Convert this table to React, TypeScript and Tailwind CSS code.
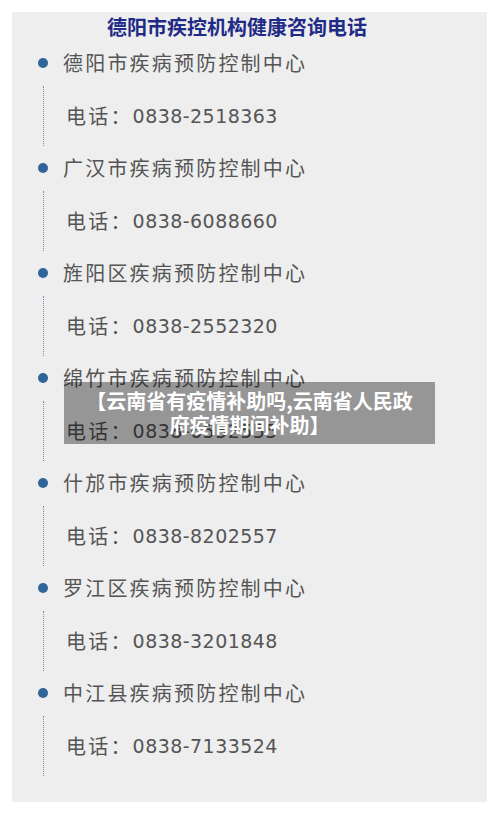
import React from "react";

const items = [
  { name: "德阳市疾病预防控制中心", phone: "0838-2518363" },
  { name: "广汉市疾病预防控制中心", phone: "0838-6088660" },
  { name: "旌阳区疾病预防控制中心", phone: "0838-2552320" },
  { name: "绵竹市疾病预防控制中心", phone: "0838-6552555" },
  { name: "什邡市疾病预防控制中心", phone: "0838-8202557" },
  { name: "罗江区疾病预防控制中心", phone: "0838-3201848" },
  { name: "中江县疾病预防控制中心", phone: "0838-7133524" },
];

const cjk = { fontFamily: '"Noto Sans CJK SC", "Noto Sans", sans-serif' };
const digits = { fontFamily: '"DejaVu Sans", "Noto Sans CJK SC", sans-serif' };

export default function App() {
  return (
    <div className="relative w-[500px] h-[827px] bg-white pt-[12px] pl-[12px]" style={cjk}>
      <div className="w-[475px] h-[790px] bg-[#eeeeee] flex flex-col">
        <div className="h-[30px] leading-[30px] pl-[95px] text-[20px] font-bold text-[#1f2b86] mb-[6px]">
          德阳市疾控机构健康咨询电话
        </div>
        {items.map((it) => (
          <div key={it.name} className="flex flex-col h-[105px]">
            <div className="flex items-center h-[30px]">
              <span className="ml-[26px] w-[10px] h-[10px] rounded-full bg-[#2f6598] shrink-0" />
              <span className="ml-[15px] text-[20px] leading-[30px] tracking-[2.2px] text-[#555555] whitespace-nowrap">
                {it.name}
              </span>
            </div>
            <div className="mt-[8px] ml-[31px] h-[60px] border-l border-dotted border-[#6e8fb8] flex items-center pl-[22px] text-[#555555]">
              <span className="text-[20px] tracking-[2.2px] leading-[30px]">电话：</span>
              <span className="text-[19px] leading-[30px] tracking-[0.45px]" style={digits}>
                {it.phone}
              </span>
            </div>
          </div>
        ))}
      </div>
      <div className="absolute left-[64px] top-[382px] w-[371px] h-[62px] bg-black/[0.37] flex flex-col items-center justify-center text-white font-bold text-[20px] leading-[24px] text-center">
        <div className="whitespace-nowrap">【云南省有疫情补助吗,云南省人民政</div>
        <div className="whitespace-nowrap">府疫情期间补助】</div>
      </div>
    </div>
  );
}
